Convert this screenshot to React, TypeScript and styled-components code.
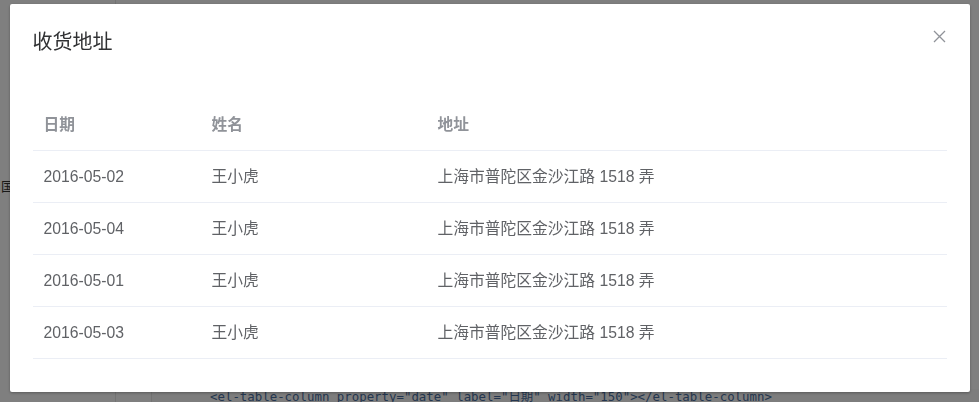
import React from 'react';
import styled, { createGlobalStyle } from 'styled-components';

const rows = [
  { date: '2016-05-02', name: '王小虎', address: '上海市普陀区金沙江路 1518 弄' },
  { date: '2016-05-04', name: '王小虎', address: '上海市普陀区金沙江路 1518 弄' },
  { date: '2016-05-01', name: '王小虎', address: '上海市普陀区金沙江路 1518 弄' },
  { date: '2016-05-03', name: '王小虎', address: '上海市普陀区金沙江路 1518 弄' },
];

const GlobalStyle = createGlobalStyle`
  html, body {
    margin: 0;
    padding: 0;
    width: 979px;
    height: 402px;
    overflow: hidden;
    background: #fff;
    font-family: "Liberation Sans", "Noto Sans CJK SC", sans-serif;
  }
`;

// page behind the mask
const Page = styled.div`
  width: 979px;
  height: 402px;
  display: flex;
  background: #fff;
`;

const Sidebar = styled.div`
  width: 116px;
  border-right: 1px solid #e6e6e6;
  display: flex;
  flex-direction: column;
  padding-top: 178px;
  box-sizing: border-box;
`;

const SideText = styled.span`
  font-size: 13px;
  line-height: 16px;
  color: #333;
  padding-left: 1px;
  font-family: "Noto Sans CJK SC", sans-serif;
`;

const Main = styled.div`
  flex: 1;
  display: flex;
  flex-direction: column;
  justify-content: flex-end;
`;

const CodeBlock = styled.div`
  margin-left: 35px;
  border-left: 1px solid #e6e6e6;
  background: #fafafa;
  height: 13px;
  padding-left: 58px;
  overflow: hidden;
`;

const CodeLine = styled.pre`
  margin: 0;
  font-family: "DejaVu Sans Mono", "Noto Sans CJK SC", monospace;
  font-size: 12.4px;
  line-height: 16px;
  color: #4a6fa0;
  white-space: pre;
`;

const Mask = styled.div`
  position: fixed;
  inset: 0;
  background: rgba(0, 0, 0, 0.5);
  display: flex;
  justify-content: center;
  align-items: flex-start;
  padding-top: 4px;
`;

const Dialog = styled.div`
  position: relative;
  width: 960px;
  background: #fff;
  border-radius: 2px;
  box-shadow: 0 1px 3px rgba(0, 0, 0, 0.3);
`;

const Header = styled.div`
  padding: 23px 23px 11px;
`;

const Title = styled.span`
  font-size: 20px;
  line-height: 27px;
  color: #303133;
  font-family: "Noto Sans CJK SC", sans-serif;
`;

const CloseButton = styled.button`
  position: absolute;
  top: 23px;
  right: 21px;
  width: 18px;
  height: 18px;
  padding: 0;
  border: none;
  background: transparent;
  display: flex;
  align-items: center;
  justify-content: center;
  cursor: pointer;
`;

const Body = styled.div`
  padding: 34px 23px 33px 23px;
`;

const Row = styled.div`
  display: grid;
  grid-template-columns: 168px 226px 1fr;
  height: 51px;
  border-bottom: 1px solid #ebeef5;
  align-items: center;
`;

const Cell = styled.div<{ $head?: boolean }>`
  padding-left: 11px;
  font-size: 15.75px;
  line-height: 26px;
  color: ${(p) => (p.$head ? '#909399' : '#606266')};
  font-weight: ${(p) => (p.$head ? 700 : 400)};
  white-space: nowrap;
`;

export default function App() {
  return (
    <>
      <GlobalStyle />
      <Page>
        <Sidebar>
          <SideText>国</SideText>
        </Sidebar>
        <Main>
          <CodeBlock>
            <CodeLine>{'<el-table-column property="date" label="日期" width="150"></el-table-column>'}</CodeLine>
          </CodeBlock>
        </Main>
      </Page>
      <Mask>
        <Dialog>
          <Header>
            <Title>收货地址</Title>
          </Header>
          <CloseButton aria-label="close">
            <svg width="13" height="13" viewBox="0 0 13 13">
              <path d="M1 1L12 12M12 1L1 12" stroke="#909399" strokeWidth="1.3" fill="none" />
            </svg>
          </CloseButton>
          <Body>
            <Row>
              <Cell $head>日期</Cell>
              <Cell $head>姓名</Cell>
              <Cell $head>地址</Cell>
            </Row>
            {rows.map((r, i) => (
              <Row key={i}>
                <Cell>{r.date}</Cell>
                <Cell>{r.name}</Cell>
                <Cell>{r.address}</Cell>
              </Row>
            ))}
          </Body>
        </Dialog>
      </Mask>
    </>
  );
}
